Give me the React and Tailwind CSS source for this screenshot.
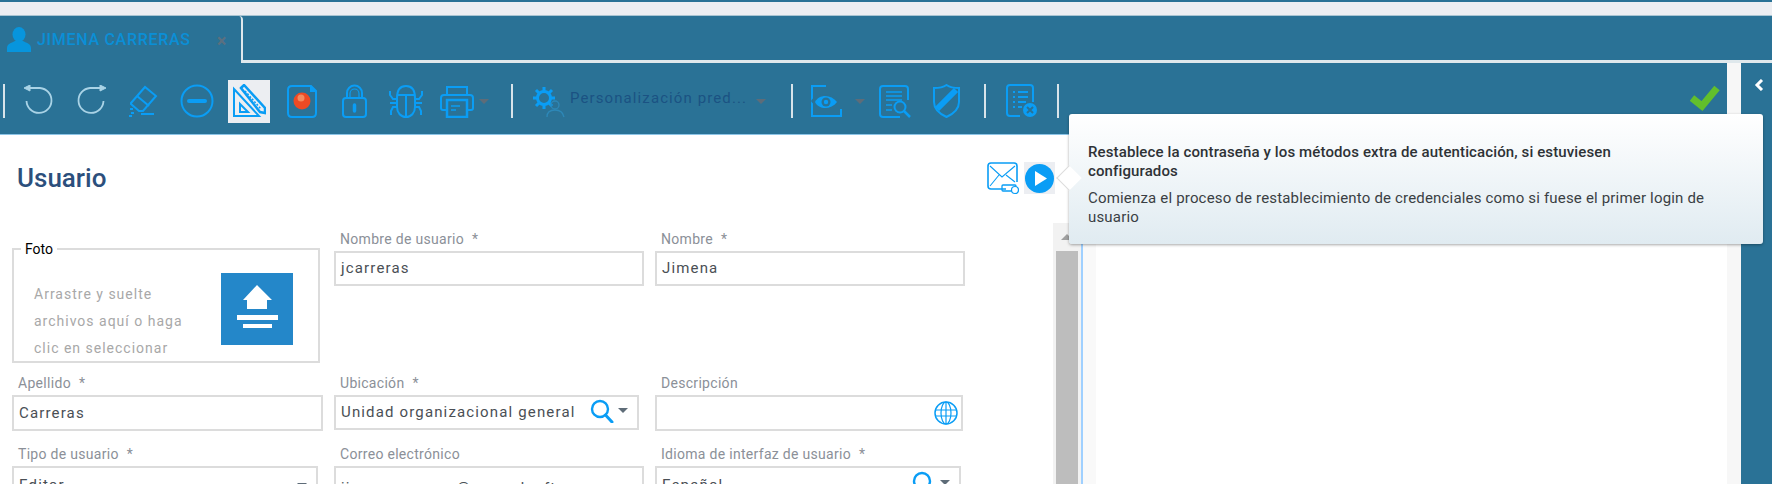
const BLUE = "#0a9df5";

function Svg({ w, h, className = "", children }) {
  return (
    <svg
      width={w}
      height={h}
      viewBox={`0 0 ${w} ${h}`}
      fill="none"
      stroke={BLUE}
      strokeWidth="2"
      className={className}
    >
      {children}
    </svg>
  );
}

const UndoIcon = ({ flip }) => (
  <Svg w={32} h={32} className={flip ? "-scale-x-100" : ""}>
    <path d="M6 3 H17 A12.5 12.5 0 1 1 3.5 16" stroke="#a9d3e6" strokeWidth="1.8" />
    <path d="M1 3 L7 0 V6 Z" fill="#a9d3e6" stroke="#a9d3e6" strokeWidth="1" />
  </Svg>
);

const EraserIcon = () => (
  <Svg w={32} h={36}>
    <path d="M3 20 L17 4 L28 13 L15 28 H11 L3 21 Z" />
    <path d="M9 13 L21 23" />
    <path d="M13 31 H26" />
    <path d="M2 26 h3 M3 30 h3 M1 33 h3" strokeWidth="2" />
  </Svg>
);

const MinusIcon = () => (
  <Svg w={34} h={34}>
    <circle cx="17" cy="17" r="15.5" />
    <path d="M9 17 H25" strokeWidth="4" strokeLinecap="round" />
  </Svg>
);

const DrawingIcon = () => (
  <Svg w={34} h={34}>
    <path d="M2 5 L27 32 H2 Z" />
    <path d="M8 20 L16 28 H8 Z" />
    <path d="M9 4 L12 1 L33 24 L33 29 L28 28 L9 4 Z" strokeWidth="2.5" />
    <path d="M13 7 L29 25" strokeWidth="1.5" strokeDasharray="2 1.5" />
  </Svg>
);

const RecordIcon = () => (
  <Svg w={30} h={33}>
    <path d="M24 1 H5 Q1 1 1 5 V28 Q1 32 5 32 H25 Q29 32 29 28 V6" />
    <path d="M24 1 L29 6 H24 Z" fill={BLUE} />
    <circle cx="15" cy="16" r="8.5" fill="#ee4a24" stroke="none" />
    <circle cx="14" cy="13" r="3.5" fill="#f58a5e" stroke="none" />
  </Svg>
);

const LockIcon = () => (
  <Svg w={25} h={34}>
    <path d="M5 14 V9 A7.5 7.5 0 0 1 20 9 V14" />
    <path d="M8 14 V9.5 A4.5 4.5 0 0 1 17 9.5 V14" strokeWidth="1.2" />
    <rect x="1" y="14" width="23" height="19" rx="3" />
    <path d="M12.5 21 V27" strokeWidth="3.5" strokeLinecap="round" />
  </Svg>
);

const BugIcon = () => (
  <Svg w={34} h={34}>
    <path d="M17 2 C24 2 26 8 26 14 V23 C26 29 22 33 17 33 C12 33 8 29 8 23 V14 C8 8 10 2 17 2 Z" />
    <path d="M8 11 H26 M17 11 V33" />
    <path d="M8 15 H4 L1 11 V7 M26 15 H30 L33 11 V7" />
    <path d="M8 19 H1 M26 19 H33" />
    <path d="M8 23 H4 L2 27 V31 M26 23 H30 L32 27 V31" />
  </Svg>
);

const PrintIcon = () => (
  <Svg w={34} h={33}>
    <path d="M7 10 V2 H27 V10" />
    <path d="M7 25 H3 Q1 25 1 23 V13 Q1 10 4 10 H30 Q33 10 33 13 V23 Q33 25 31 25 H27" />
    <path d="M7 15 H27 V32 H7 Z" strokeWidth="2.5" />
    <path d="M11 21 H20 M11 25 H16" strokeWidth="1.5" />
  </Svg>
);

const GearUsersIcon = () => (
  <Svg w={34} h={33}>
    <circle cx="13" cy="13" r="6.5" strokeWidth="3" />
    <path d="M13 2 V6 M13 20 V24 M2 13 H6 M20 13 H24 M5 5 L8 8 M18 18 L21 21 M21 5 L18 8 M5 21 L8 18" strokeWidth="3" />
    <circle cx="24" cy="20" r="4" stroke="#2d88b8" strokeWidth="1.3" />
    <path d="M16 32 C16 27 19 25 24 25 C29 25 32 27 33 32" stroke="#2d88b8" strokeWidth="1.3" />
  </Svg>
);

const EyeDocIcon = () => (
  <Svg w={32} h={33}>
    <path d="M16 1 H2 V31 H31 V24" />
    <path d="M1 16 C6 7 24 7 29 16 C24 25 6 25 1 16 Z" fill="#2a7296" stroke="none" />
    <path d="M5 17 C9 9 21 9 27 17 C21 25 9 25 5 17 Z" fill={BLUE} stroke="none" />
    <circle cx="16" cy="17" r="4.5" fill="#2a7296" stroke="none" />
    <circle cx="16" cy="17" r="2.2" fill={BLUE} stroke="none" />
  </Svg>
);

const ReportIcon = () => (
  <Svg w={32} h={33}>
    <path d="M21 32 H4 Q1 32 1 29 V4 Q1 1 4 1 H26 Q29 1 29 4 V15" />
    <path d="M7 7 H23 M7 11 H23 M7 15 H23 M7 20 H13 M7 25 H13" strokeWidth="1.6" />
    <circle cx="21" cy="22" r="5.5" />
    <path d="M25 26 L31 32" strokeWidth="2.5" />
  </Svg>
);

const ShieldIcon = () => (
  <Svg w={27} h={34}>
    <path d="M13.5 1 C18 4 22 4 26 4 V18 C26 25 20 30 13.5 33 C7 30 1 25 1 18 V4 C5 4 9 4 13.5 1 Z" />
    <path d="M4 25 L23 6" strokeWidth="6" />
  </Svg>
);

const ListXIcon = () => (
  <Svg w={32} h={34}>
    <path d="M14 32 H4 Q1 32 1 29 V4 Q1 1 4 1 H24 Q27 1 27 4 V18" />
    <path d="M7 8 H9 M12 8 H22 M7 13 H9 M12 13 H22 M7 18 H9 M12 18 H20 M7 23 H9 M12 23 H16" strokeWidth="1.8" />
    <circle cx="24" cy="26" r="7" fill={BLUE} stroke="none" />
    <path d="M21 23 L27 29 M27 23 L21 29" stroke="#2a7296" strokeWidth="2" />
  </Svg>
);

const MailIcon = () => (
  <Svg w={32} h={33}>
    <path d="M19 27 H4 Q1 27 1 24 V4 Q1 1 4 1 H27 Q30 1 30 4 V20" strokeWidth="1.6" />
    <path d="M3 4 L15 15 L28 4 M3 24 L12 13 M28 20 L19 13" strokeWidth="1.1" />
    <rect x="15" y="23" width="14" height="6" rx="1" strokeWidth="1.3" />
    <circle cx="28" cy="28" r="3.5" strokeWidth="1.2" fill="white" />
  </Svg>
);

const SearchIcon = () => (
  <Svg w={24} h={24}>
    <circle cx="10" cy="10" r="8" strokeWidth="2.4" />
    <path d="M15.5 16 L22 23" strokeWidth="3" strokeLinecap="round" />
  </Svg>
);

const GlobeIcon = () => (
  <Svg w={24} h={24} className="shrink-0">
    <circle cx="12" cy="12" r="11" strokeWidth="1.5" />
    <ellipse cx="12" cy="12" rx="5" ry="11" strokeWidth="1.2" />
    <path d="M12 1 V23 M1.5 9 H22.5 M1.5 15 H22.5" strokeWidth="1.2" />
  </Svg>
);

const Caret = ({ className = "border-t-[#5e6c78]" }) => (
  <span className={`w-0 h-0 border-x-[5px] border-x-transparent border-t-[5px] ${className}`} />
);

const Separator = ({ className = "" }) => <span className={`w-[2px] h-[34px] bg-[#d8e4ea] shrink-0 ${className}`} />;

const Slot = ({ children, className = "w-[52px]" }) => (
  <span className={`flex items-center justify-center shrink-0 ${className}`}>{children}</span>
);

function Toolbar() {
  return (
    <div className="h-[72px] flex items-center pl-[3px] pt-[5px] bg-[#2a7296] border-b border-[#8cc4e6]">
      <Separator />
      <Slot className="w-[61px] pl-[7px]"><UndoIcon /></Slot>
      <Slot className="w-[50px]"><UndoIcon flip /></Slot>
      <Slot className="w-[54px] pl-[2px]"><EraserIcon /></Slot>
      <Slot className="w-[53px]"><MinusIcon /></Slot>
      <Slot className="w-[42px] h-[43px] ml-[5px] bg-[#eceef2]"><DrawingIcon /></Slot>
      <Slot className="w-[63px]"><RecordIcon /></Slot>
      <Slot className="w-[43px]"><LockIcon /></Slot>
      <Slot className="w-[60px]"><BugIcon /></Slot>
      <Slot className="w-[42px]"><PrintIcon /></Slot>
      <Slot className="w-[12px]"><Caret /></Slot>
      <Separator className="ml-[21px]" />
      <Slot className="w-[53px] pl-[16px]"><GearUsersIcon /></Slot>
      <span className="w-[176px] ml-[4px] mb-[5px] text-[15px] tracking-[1.1px] text-[#1b5283] whitespace-nowrap">
        Personalización pred...
      </span>
      <Slot className="w-[29px]"><Caret /></Slot>
      <Separator className="ml-[16px]" />
      <Slot className="w-[59px] pl-[7px]"><EyeDocIcon /></Slot>
      <Slot className="w-[16px]"><Caret /></Slot>
      <Slot className="w-[53px] pl-[1px]"><ReportIcon /></Slot>
      <Slot className="w-[50px]"><ShieldIcon /></Slot>
      <Separator className="ml-[13px]" />
      <Slot className="w-[71px]"><ListXIcon /></Slot>
      <Separator />
      <span className="ml-auto mr-[7px] mb-[6px]">
        <svg width="30" height="26" viewBox="0 0 30 26" fill="none" stroke="#62bf2c" strokeWidth="7">
          <path d="M2 13 L12 21 L27 3" />
        </svg>
      </span>
    </div>
  );
}

function Field({ label, required, className = "", inputClass = "", children }) {
  return (
    <div className={className}>
      <div className="h-[20px] pl-[6px] text-[14px] leading-[16px] tracking-[0.3px] text-[#8b9098]">
        {label}
        {required && <span className="ml-[8px]">*</span>}
      </div>
      <div className={`h-[35px] border-2 border-[#dcdcdc] flex items-center pl-[5px] pr-[3px] text-[15px] tracking-[1.15px] text-[#4a4f55] bg-white whitespace-nowrap overflow-hidden ${inputClass}`}>
        {children}
      </div>
    </div>
  );
}

function PhotoBox() {
  return (
    <fieldset className="mt-[18px] w-[308px] h-[122px] border-2 border-[#dcdcdc] pl-[20px] pr-[25px]">
      <legend className="-ml-[13px] px-[4px] text-[14px] leading-[16px] text-black">Foto</legend>
      <div className="flex justify-between items-start pt-[17px]">
        <p className="mt-[7px] text-[14px] leading-[27px] tracking-[1px] text-[#a8a8a8]">
          Arrastre y suelte
          <br />
          archivos aquí o haga
          <br />
          clic en seleccionar
        </p>
        <div className="w-[72px] h-[72px] -mt-[1px] bg-[#2487c9] shrink-0">
          <svg width="72" height="72" viewBox="0 0 72 72" fill="white">
            <path d="M36 12 L22 27 H26 V36 H46 V27 H51 Z" />
            <rect x="16" y="42" width="41" height="5" />
            <rect x="22" y="51" width="29" height="4" />
          </svg>
        </div>
      </div>
    </fieldset>
  );
}

function UserForm() {
  return (
    <div className="flex-1 min-w-0 pl-[12px] pt-[8px]">
      <div className="grid grid-cols-[311px_310px_310px] grid-rows-[144px_71px_auto] gap-x-[11px]">
        <div className="-mt-[8px]"><PhotoBox /></div>
        <Field label="Nombre de usuario" required>jcarreras</Field>
        <Field label="Nombre" required>Jimena</Field>

        <Field label="Apellido" required inputClass="h-[36px]">Carreras</Field>
        <Field label="Ubicación" required className="w-[305px]">
          <span>Unidad organizacional general</span>
          <span className="ml-auto mb-[4px] flex items-center gap-[4px] pr-[6px]">
            <SearchIcon />
            <Caret />
          </span>
        </Field>
        <Field label="Descripción" inputClass="h-[36px] justify-end w-[308px]">
          <GlobeIcon />
        </Field>

        <Field label="Tipo de usuario" required className="w-[306px]" inputClass="pt-[4px]">
          <span>Editor</span>
          <span className="ml-auto pr-[6px] flex items-center"><Caret /></span>
        </Field>
        <Field label="Correo electrónico" inputClass="pt-[10px]">jimenacarreras@grupodsoft.com</Field>
        <Field label="Idioma de interfaz de usuario" required className="w-[306px]" inputClass="pt-[4px]">
          <span>Español</span>
          <span className="ml-auto mb-[6px] flex items-center gap-[4px] pr-[6px]">
            <SearchIcon />
            <Caret />
          </span>
        </Field>
      </div>
    </div>
  );
}

function Tooltip() {
  return (
    <div className="absolute left-[1069px] top-[114px] w-[694px] h-[130px] rounded-[3px] bg-gradient-to-b from-white to-[#e0ebf1] shadow-[0_1px_3px_rgba(0,0,0,0.35)] pl-[19px] pr-[40px] pt-[29px] text-[15px] leading-[19px] tracking-[0.18px] text-[#3a3f44]">
      <span className="absolute -left-[9px] top-[55px] w-[18px] h-[18px] rotate-45 bg-white border-b border-l border-[#dcdcdc]" />
      <p className="relative font-medium tracking-[0.12px] text-[#2e3236]">
        Restablece la contraseña y los métodos extra de autenticación, si estuviesen
        <br />
        configurados
      </p>
      <p className="relative mt-[8px]">
        Comienza el proceso de restablecimiento de credenciales como si fuese el primer login de
        <br />
        usuario
      </p>
    </div>
  );
}

export default function App() {
  return (
    <div className="relative w-[1772px] h-[484px] overflow-hidden bg-white font-['Roboto',sans-serif]">
      <div className="h-[2px] bg-[#2a7296]" />
      <div className="h-[13px] bg-[#eceef2]" />

      <div className="h-[48px] flex bg-[#2a7296] border-t border-[#a8c4d2]">
        <div className="w-[243px] h-full flex items-center pl-[7px] border-r-2 border-[#dfe8ec] rounded-tr-[4px] shrink-0">
          <svg width="24" height="25" viewBox="0 0 24 25" fill="#0795dd" className="shrink-0">
            <ellipse cx="12" cy="7.5" rx="6.5" ry="7.5" />
            <path d="M0 25 V21 C0 17 4 16 8 14 H16 C20 16 24 17 24 21 V25 Z" />
          </svg>
          <span className="ml-[6px] text-[16px] font-medium tracking-[0.7px] text-[#0b8fd6] whitespace-nowrap">
            JIMENA CARRERAS
          </span>
          <span className="ml-[26px] mt-[2px] text-[18px] leading-none font-bold text-[#5b7080]">×</span>
        </div>
        <div className="flex-1 mt-auto h-[3px] bg-[#dfe8ec]" />
      </div>

      <div className="flex h-[421px]">
        <div className="w-[1727px] shrink-0 flex flex-col">
          <Toolbar />
          <div className="flex-1 flex min-h-0">
            <div className="w-[1081px] shrink-0 flex flex-col">
              <div className="h-[88px] flex items-center justify-between pl-[17px] pr-[26px] pb-[2px] shrink-0">
                <h1 className="text-[26px] font-medium text-[#2c4f7c]">Usuario</h1>
                <div className="flex items-center gap-[5px]">
                  <MailIcon />
                  <div className="w-[31px] h-[32px] bg-[#eceef2] flex items-center justify-center">
                    <svg width="29" height="29" viewBox="0 0 29 29">
                      <circle cx="14.5" cy="14.5" r="14.5" fill={BLUE} />
                      <path d="M10 7 L22 14.5 L10 22 Z" fill="white" />
                    </svg>
                  </div>
                </div>
              </div>
              <div className="flex-1 flex min-h-0">
                <UserForm />
                <div className="w-[28px] shrink-0 bg-[#f2f2f2] px-[3px] flex flex-col">
                  <span className="h-[28px] flex items-center justify-center shrink-0">
                    <span className="w-0 h-0 border-x-[6px] border-x-transparent border-b-[6px] border-b-[#a0a0a0]" />
                  </span>
                  <div className="flex-1 bg-[#bdbdbd]" />
                </div>
              </div>
            </div>
            <div className="flex-1 border-l-2 border-[#9fd0ff] flex">
              <div className="w-[13px] bg-[#f9f9f9]" />
              <div className="flex-1 bg-white" />
            </div>
          </div>
        </div>

        <div className="w-[14px] shrink-0 bg-[#f7f7f7]" />

        <div className="flex-1 bg-[#2a7296] flex justify-center pt-[16px] pl-[4px]">
          <svg width="10" height="12" viewBox="0 0 10 12" fill="none" stroke="white" strokeWidth="3">
            <path d="M8 1 L3 6 L8 11" />
          </svg>
        </div>
      </div>

      <Tooltip />
    </div>
  );
}
